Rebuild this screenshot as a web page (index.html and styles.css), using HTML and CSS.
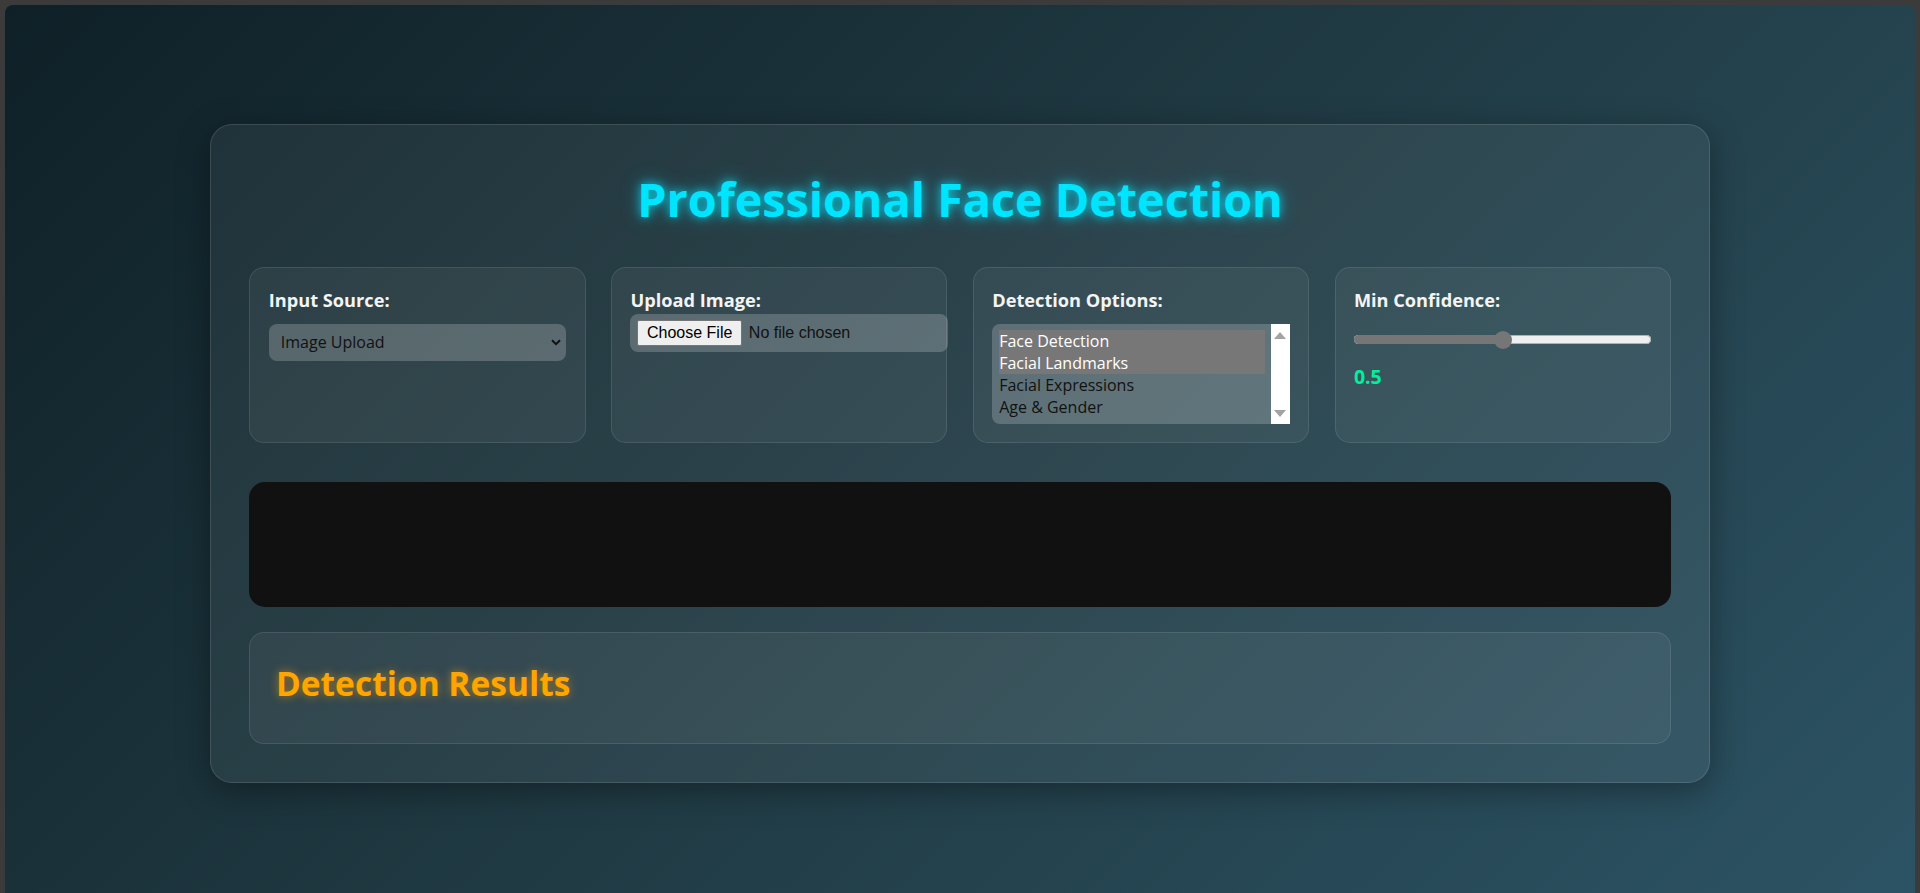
FILE: index.html
```html
<!DOCTYPE html>
<html lang="en">
<head>
<meta charset="utf-8">
<title>Professional Face Detection</title>
<link rel="stylesheet" href="styles.css">
</head>
<body>
<div class="screen">
  <div class="container">
    <h1 class="title">Professional Face Detection</h1>
    <div class="controls">
      <div class="panel">
        <label class="label" for="source">Input Source:</label>
        <div class="select-wrap">
          <select class="select" id="source"><option>Image Upload</option></select>
          <svg class="chevron" width="10" height="7" viewBox="0 0 10 7"><path d="M1 1.2 L5 5.2 L9 1.2" fill="none" stroke="#111" stroke-width="2"/></svg>
        </div>
      </div>
      <div class="panel">
        <label class="label" for="upload">Upload Image:</label>
        <input class="file" id="upload" type="file">
      </div>
      <div class="panel">
        <span class="label">Detection Options:</span>
        <div class="listbox">
          <div class="options">
            <div class="option selected">Face Detection</div>
            <div class="option selected">Facial Landmarks</div>
            <div class="option">Facial Expressions</div>
            <div class="option">Age &amp; Gender</div>
          </div>
          <div class="scrollbar">
            <svg width="12" height="7" viewBox="0 0 12 7"><path d="M0 7 L6 0 L12 7 Z" fill="#a3a3a3"/></svg>
            <svg width="12" height="7" viewBox="0 0 12 7"><path d="M0 0 L6 7 L12 0 Z" fill="#a3a3a3"/></svg>
          </div>
        </div>
      </div>
      <div class="panel">
        <span class="label">Min Confidence:</span>
        <div class="slider">
          <div class="track"><div class="fill" style="width:50%"></div></div>
          <div class="thumb"></div>
        </div>
        <div class="value">0.5</div>
      </div>
    </div>
    <div class="viewer"></div>
    <div class="results">
      <h2 class="results-title">Detection Results</h2>
    </div>
  </div>
</div>
</body>
</html>
```
FILE: styles.css
```css
* { box-sizing: border-box; }
html, body { margin: 0; height: 100%; overflow: hidden; }
body {
  background: #3b3b3b;
  padding: 5px 5px 0;
  font-family: "Open Sans", "Noto Sans", sans-serif;
}
.screen {
  height: calc(100vh - 5px);
  border-radius: 8px 8px 0 0;
  background: linear-gradient(135deg, #0f2027 0%, #203a43 50%, #2c5364 100%);
  padding-top: 119.3px;
  color: #fff;
  overflow: hidden;
}
.container {
  width: 1500px;
  margin: 0 auto;
  padding: 38.4px;
  border: 1px solid rgba(255,255,255,0.12);
  border-radius: 22px;
  background: rgba(255,255,255,0.06);
  box-shadow: 0 8px 32px rgba(0,0,0,0.35);
}
.title {
  margin: 0 0 33.6px;
  text-align: center;
  font-size: 46.7px;
  line-height: 70px;
  font-weight: 700;
  color: #00e5ff;
  text-shadow: 0 0 10px rgba(0,229,255,0.8), 0 0 20px rgba(0,229,255,0.45);
}
.controls {
  display: grid;
  grid-template-columns: repeat(4, 1fr);
  gap: 25.6px;
  margin-bottom: 38.7px;
}
.panel {
  padding: 18.4px;
  border: 1px solid rgba(255,255,255,0.1);
  border-radius: 15px;
  background: rgba(255,255,255,0.05);
}
.label {
  display: block;
  font-size: 18.2px;
  line-height: 27px;
  font-weight: 700;
  color: #f4f4f4;
}
.select-wrap {
  position: relative;
  margin-top: 10px;
}
.select {
  display: block;
  width: 100%;
  height: 37px;
  padding: 0 12px;
  border: none;
  border-radius: 8px;
  background: rgba(255,255,255,0.2);
  color: #111;
  font-family: "Open Sans", "Noto Sans", sans-serif;
  font-size: 16px;
  appearance: none;
  -webkit-appearance: none;
}
.chevron {
  position: absolute;
  right: 5px;
  top: 15px;
  pointer-events: none;
}
.file {
  display: block;
  width: calc(100% + 20px);
  height: 38px;
  margin: 0;
  padding: 6px 13px 6px 7px;
  border: none;
  border-radius: 8px;
  background: rgba(255,255,255,0.2);
  color: #111;
  font-family: "Liberation Sans", Arial, sans-serif;
  font-size: 16px;
}
.file::file-selector-button {
  font: inherit;
  height: 26px;
  padding: 0 8.5px;
  margin: 0 7px 0 0;
  border: 1px solid #767676;
  border-radius: 2px;
  background: #efefef;
  color: #000;
}
.listbox {
  display: flex;
  height: 100px;
  margin-top: 10px;
  border-radius: 8px;
  background: rgba(255,255,255,0.2);
}
.options {
  flex: 1;
  padding: 6px 6px 6px 7px;
  overflow: hidden;
}
.option {
  height: 22px;
  line-height: 22px;
  font-size: 16px;
  color: #111;
  white-space: nowrap;
}
.option.selected {
  background: #777;
  color: #fff;
}
.scrollbar {
  width: 19px;
  background: #fff;
  display: flex;
  flex-direction: column;
  justify-content: space-between;
  align-items: center;
  padding: 8px 0 7px;
}
.scrollbar svg { display: block; }
.slider {
  position: relative;
  height: 18px;
  margin-top: 17.3px;
}
.track {
  position: absolute;
  left: 0;
  right: 0;
  top: 4.5px;
  height: 9px;
  border-radius: 4.5px;
  background: #efefef;
  box-shadow: inset 0 0 0 1px #b0b0b0;
  overflow: hidden;
}
.fill {
  height: 100%;
  background: #767676;
}
.thumb {
  position: absolute;
  left: calc(50% - 9px);
  top: 0;
  width: 18px;
  height: 18px;
  border-radius: 50%;
  background: #767676;
}
.value {
  margin-top: 16px;
  font-size: 19.5px;
  line-height: 24px;
  font-weight: 700;
  color: #00f09c;
}
.viewer {
  height: 125px;
  margin-bottom: 25.6px;
  border-radius: 16px;
  background: #111;
}
.results {
  padding: 25.6px;
  border: 1px solid rgba(255,255,255,0.1);
  border-radius: 15px;
  background: rgba(255,255,255,0.05);
}
.results-title {
  margin: 0 0 9.2px;
  font-size: 33.5px;
  line-height: 49px;
  font-weight: 700;
  color: #ffa500;
  text-shadow: 0 0 10px rgba(255,165,0,0.6);
}
```
